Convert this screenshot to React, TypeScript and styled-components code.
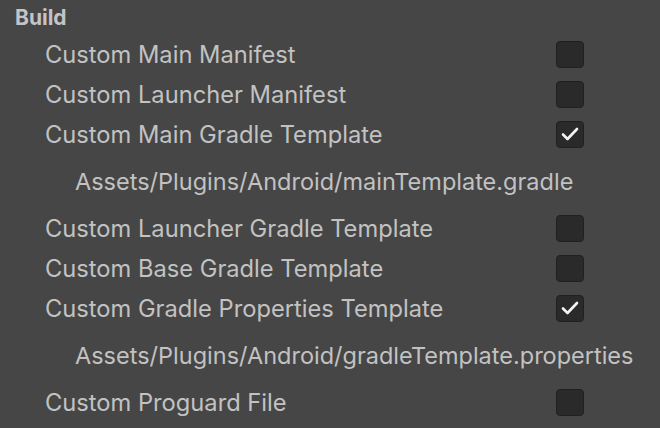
import React from 'react'
import styled, { createGlobalStyle } from 'styled-components'

type Setting = {
  label: string
  checked: boolean
  path?: string
}

const settings: Setting[] = [
  { label: 'Custom Main Manifest', checked: false },
  { label: 'Custom Launcher Manifest', checked: false },
  {
    label: 'Custom Main Gradle Template',
    checked: true,
    path: 'Assets/Plugins/Android/mainTemplate.gradle',
  },
  { label: 'Custom Launcher Gradle Template', checked: false },
  { label: 'Custom Base Gradle Template', checked: false },
  {
    label: 'Custom Gradle Properties Template',
    checked: true,
    path: 'Assets/Plugins/Android/gradleTemplate.properties',
  },
  { label: 'Custom Proguard File', checked: false },
]

export default function App() {
  return (
    <>
      <GlobalStyle />
      <Panel>
        <Header>Build</Header>
        {settings.map((s) => (
          <React.Fragment key={s.label}>
            <Row>
              <Label>{s.label}</Label>
              <Toggle $checked={s.checked}>
                {s.checked && (
                  <svg width="18" height="14" viewBox="0 0 18 14">
                    <path
                      d="M2 7.5 L6.5 12 L16 2"
                      fill="none"
                      stroke="#f2f2f2"
                      strokeWidth="2.6"
                      strokeLinecap="round"
                      strokeLinejoin="round"
                    />
                  </svg>
                )}
              </Toggle>
            </Row>
            {s.path && <PathRow>{s.path}</PathRow>}
          </React.Fragment>
        ))}
      </Panel>
    </>
  )
}

const GlobalStyle = createGlobalStyle`
  html, body {
    margin: 0;
    padding: 0;
    background: #464646;
  }
`

const Panel = styled.div`
  width: 660px;
  height: 428px;
  overflow: hidden;
  background: #464646;
  font-family: Inter, "Noto Sans", sans-serif;
  color: #c2c2c2;
`

const Header = styled.div`
  height: 34px;
  display: flex;
  align-items: center;
  padding-left: 15px;
  font-size: 21px;
  font-weight: 700;
  color: #c4c4c4;
`

const Row = styled.div`
  height: 40px;
  display: flex;
  align-items: center;
  justify-content: space-between;
  padding: 0 76px 0 45px;
`

const Label = styled.span`
  font-size: 23.7px;
`

const Toggle = styled.span<{ $checked: boolean }>`
  width: 28px;
  height: 27px;
  box-sizing: border-box;
  border: 1px solid #202020;
  border-radius: 4px;
  background: #2a2a2a;
  display: flex;
  align-items: center;
  justify-content: center;
`

const PathRow = styled.div`
  height: 54px;
  display: flex;
  align-items: center;
  padding-left: 75px;
  font-size: 23.5px;
`
